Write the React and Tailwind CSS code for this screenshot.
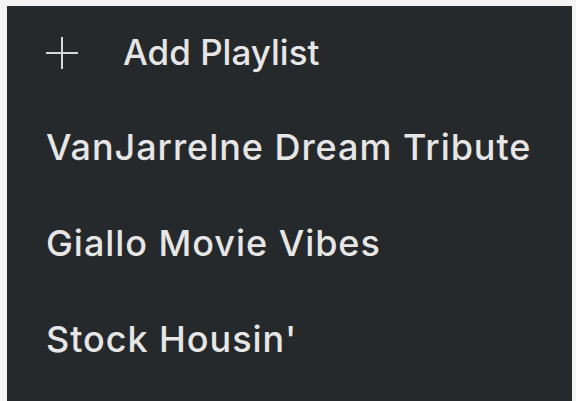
const playlists = ["VanJarrelne Dream Tribute", "Giallo Movie Vibes", "Stock Housin'"];

export default function App() {
  return (
    <div className="w-[576px] h-[401px] bg-[#f4f4f4] pl-[7px] pr-[4px] pt-[6px]" style={{ fontFamily: "Inter, sans-serif" }}>
      <div className="h-full bg-[#26292b] text-[#e6e6e6] flex flex-col">
        {/* add playlist */}
        <div className="flex items-center h-[93px] pl-[38px] gap-[44px]">
          <svg width="34" height="34" viewBox="0 0 34 34" fill="none" stroke="#d8d8d8" strokeWidth="2">
            <path d="M17 1v32M1 17h32" />
          </svg>
          <span className="text-[35px] font-medium tracking-[0px]">Add Playlist</span>
        </div>
        {playlists.map((p) => (
          <div key={p} className="flex items-center h-[96px] pl-[39px]">
            <span className="text-[36px] font-medium tracking-[0.95px]">{p}</span>
          </div>
        ))}
      </div>
    </div>
  );
}
